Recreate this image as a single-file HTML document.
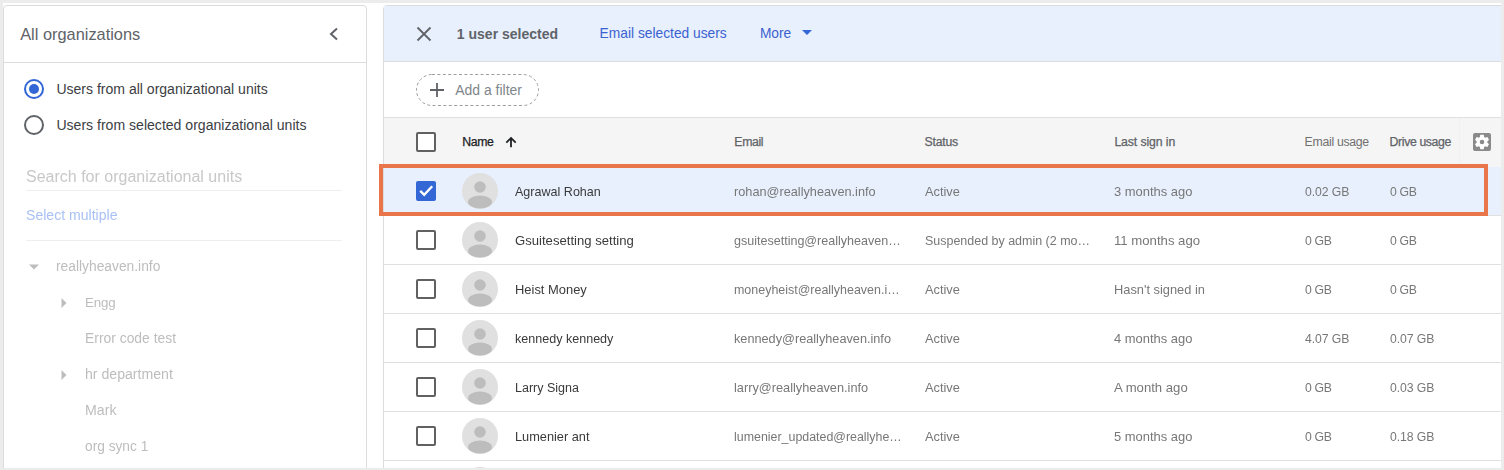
<!DOCTYPE html>
<html><head><meta charset="utf-8">
<style>
*{box-sizing:border-box;margin:0;padding:0}
html,body{width:1504px;height:470px;overflow:hidden;background:#fff;font-family:"Liberation Sans",sans-serif;position:relative}
.a{position:absolute;white-space:nowrap}
.r{position:absolute}
</style></head><body>
<div class="r" style="left:3px;top:5px;width:364px;height:520px;border:1px solid #dcdcdc;border-radius:4px;background:#fff"></div>
<div class="r" style="left:383px;top:5px;width:1200px;height:520px;border:1px solid #dcdcdc;border-radius:4px;background:#fff;overflow:hidden"></div>
<div class="a" style="left:20.20px;top:26px;font-size:16.36px;line-height:16px;color:#5f6368;font-weight:400;">All organizations</div>
<svg class="r" style="left:326px;top:26px" width="16" height="16" viewBox="0 0 16 16"><path d="M11 2.5 L5 8 L11 13.5" fill="none" stroke="#5f6368" stroke-width="2"/></svg>
<div class="r" style="left:4px;top:62px;width:362px;height:1px;background:#dcdcdc"></div>
<div class="r" style="left:24px;top:79px;width:20px;height:20px;border:2px solid #3367d6;border-radius:50%"></div>
<div class="r" style="left:29px;top:84px;width:10px;height:10px;background:#3367d6;border-radius:50%"></div>
<div class="a" style="left:56.40px;top:82px;font-size:14.04px;line-height:14px;color:#3c4043;font-weight:400;">Users from all organizational units</div>
<div class="r" style="left:24px;top:115px;width:20px;height:20px;border:2px solid #5f6368;border-radius:50%"></div>
<div class="a" style="left:56.40px;top:118px;font-size:14.07px;line-height:14px;color:#3c4043;font-weight:400;">Users from selected organizational units</div>
<div class="a" style="left:26.30px;top:169px;font-size:16.0px;line-height:16px;color:#c8c8c8;font-weight:400;will-change:transform;">Search for organizational units</div>
<div class="r" style="left:26px;top:190px;width:316px;height:1px;background:#eeeeee"></div>
<div class="a" style="left:26.00px;top:208px;font-size:14.07px;line-height:14px;color:#a8c1f4;font-weight:400;will-change:transform;">Select multiple</div>
<div class="r" style="left:26px;top:240px;width:316px;height:1px;background:#eeeeee"></div>
<svg class="r" style="left:29px;top:264px" width="10" height="6" viewBox="0 0 10 6"><path d="M0 0.5 L10 0.5 L5 5.5 Z" fill="#bdbdbd"/></svg>
<div class="a" style="left:56.20px;top:259px;font-size:13.81px;line-height:14px;color:#bdbdbd;font-weight:400;will-change:transform;">reallyheaven.info</div>
<svg class="r" style="left:61px;top:298px" width="6" height="10" viewBox="0 0 6 10"><path d="M0.5 0 L5.5 5 L0.5 10 Z" fill="#bdbdbd"/></svg>
<div class="a" style="left:85.10px;top:296px;font-size:13.3px;line-height:13px;color:#bdbdbd;font-weight:400;will-change:transform;letter-spacing:-0.118px;">Engg</div>
<div class="a" style="left:85.10px;top:331px;font-size:13.89px;line-height:14px;color:#bdbdbd;font-weight:400;will-change:transform;">Error code test</div>
<svg class="r" style="left:61px;top:370px" width="6" height="10" viewBox="0 0 6 10"><path d="M0.5 0 L5.5 5 L0.5 10 Z" fill="#bdbdbd"/></svg>
<div class="a" style="left:85.10px;top:367px;font-size:14.12px;line-height:14px;color:#bdbdbd;font-weight:400;will-change:transform;">hr department</div>
<div class="a" style="left:85.10px;top:403px;font-size:14.16px;line-height:14px;color:#bdbdbd;font-weight:400;will-change:transform;">Mark</div>
<div class="a" style="left:85.10px;top:440px;font-size:13.72px;line-height:14px;color:#bdbdbd;font-weight:400;will-change:transform;">org sync 1</div>
<div class="r" style="left:384px;top:6px;width:1117px;height:56px;background:#e8f0fe;border-bottom:1px solid #dcdcdc"></div>
<svg class="r" style="left:416px;top:26px" width="16" height="16" viewBox="0 0 16 16"><path d="M1.5 1.5 L14.5 14.5 M14.5 1.5 L1.5 14.5" fill="none" stroke="#5f6368" stroke-width="1.8"/></svg>
<div class="a" style="left:456.80px;top:27px;font-size:14.02px;line-height:14px;color:#5f6368;font-weight:700;">1 user selected</div>
<div class="a" style="left:599.60px;top:27px;font-size:13.79px;line-height:14px;color:#3b62d0;font-weight:400;">Email selected users</div>
<div class="a" style="left:759.90px;top:27px;font-size:13.77px;line-height:14px;color:#3b62d0;font-weight:400;">More</div>
<svg class="r" style="left:802px;top:30px" width="10" height="5" viewBox="0 0 10 5"><path d="M0 0 L10 0 L5 5 Z" fill="#3367d6"/></svg>
<svg class="r" style="left:416px;top:74px" width="123" height="32" viewBox="0 0 123 32"><rect x="0.5" y="0.5" width="122" height="31" rx="15.5" fill="none" stroke="#9e9e9e" stroke-width="1" stroke-dasharray="3 2.4"/></svg>
<svg class="r" style="left:429px;top:82px" width="16" height="16" viewBox="0 0 16 16"><path d="M8 1 V15 M1 8 H15" fill="none" stroke="#5f6368" stroke-width="1.8"/></svg>
<div class="a" style="left:455.30px;top:83px;font-size:13.95px;line-height:14px;color:#80868b;font-weight:400;">Add a filter</div>
<div class="r" style="left:384px;top:117px;width:1117px;height:50px;background:#f5f5f5;border-top:1px solid #e0e0e0"></div>
<div class="r" style="left:416px;top:132px;width:20px;height:20px;border:2px solid #616161;border-radius:2px;background:#fff"></div>
<div class="a" style="left:462.30px;top:136px;font-size:12.28px;line-height:12px;color:#202124;font-weight:400;-webkit-text-stroke:0.25px #202124;letter-spacing:-0.363px;">Name</div>
<svg class="r" style="left:505px;top:136px" width="12" height="12" viewBox="0 0 12 12"><path d="M6 11.2 V2 M1.3 6.6 L6 1.9 L10.7 6.6" fill="none" stroke="#202124" stroke-width="1.8"/></svg>
<div class="a" style="left:734.30px;top:136px;font-size:12.28px;line-height:12px;color:#5f6368;font-weight:400;-webkit-text-stroke:0.25px #5f6368;letter-spacing:-0.350px;">Email</div>
<div class="a" style="left:924.50px;top:136px;font-size:12.28px;line-height:12px;color:#5f6368;font-weight:400;-webkit-text-stroke:0.25px #5f6368;letter-spacing:-0.223px;">Status</div>
<div class="a" style="left:1114.40px;top:136px;font-size:12.28px;line-height:12px;color:#5f6368;font-weight:400;-webkit-text-stroke:0.25px #5f6368;letter-spacing:-0.103px;">Last sign in</div>
<div class="a" style="left:1304.60px;top:136px;font-size:12.28px;line-height:12px;color:#707070;font-weight:400;letter-spacing:-0.290px;">Email usage</div>
<div class="a" style="left:1389.60px;top:136px;font-size:12.28px;line-height:12px;color:#5f6368;font-weight:400;-webkit-text-stroke:0.25px #5f6368;letter-spacing:-0.371px;">Drive usage</div>
<div class="r" style="left:1459px;top:118px;width:1px;height:48px;background:#f0f0f0"></div>
<div class="r" style="left:1473px;top:133px;width:18px;height:18px;background:#8a8a8a;border-radius:2px"></div>
<svg class="r" style="left:1473px;top:133px" width="18" height="18" viewBox="0 0 24 24"><path fill="#fff" d="M19.14 12.94c.04-.3.06-.61.06-.94 0-.32-.02-.64-.07-.94l2.03-1.58c.18-.14.23-.41.12-.61l-1.92-3.32c-.12-.22-.37-.29-.59-.22l-2.39.96c-.5-.38-1.030-.7-1.62-.94l-.36-2.54c-.04-.24-.24-.41-.48-.41h-3.84c-.24 0-.43.17-.47.41l-.36 2.54c-.59.24-1.13.57-1.62.94l-2.39-.96c-.22-.08-.47 0-.59.22L2.74 8.870c-.12.21-.08.47.12.61l2.03 1.58c-.05.3-.09.63-.09.94s.02.64.07.94l-2.03 1.58c-.18.14-.23.41-.12.61l1.920 3.32c.12.22.37.29.59.22l2.39-.96c.5.38 1.03.7 1.62.94l.36 2.54c.05.24.24.41.48.41h3.84c.24 0 .44-.17.47-.41l.36-2.54c.59-.24 1.13-.56 1.62-.94l2.39.96c.22.08.47 0 .59-.22l1.92-3.32c.12-.22.07-.47-.12-.61l-2.01-1.58z"/><circle cx="12" cy="12" r="3" fill="#8a8a8a"/></svg>
<div class="r" style="left:384px;top:167px;width:1117px;height:49px;background:#e8f0fe;border-bottom:1px solid #e0e0e0"></div>
<div class="r" style="left:416px;top:181px;width:20px;height:20px;background:#3367d6;border-radius:2px"></div>
<svg class="r" style="left:416px;top:181px" width="20" height="20" viewBox="0 0 20 20"><path d="M4.2 9.8 L8.2 13.8 L16.2 5.2" fill="none" stroke="#fff" stroke-width="2.4"/></svg>
<svg class="r" style="left:462px;top:173px" width="36" height="36" viewBox="0 0 36 36"><defs><clipPath id="cp0"><circle cx="18" cy="18" r="18"/></clipPath></defs><circle cx="18" cy="18" r="18" fill="#e0e0e0"/><g clip-path="url(#cp0)"><circle cx="18" cy="14" r="5.8" fill="#bdbdbd"/><ellipse cx="18" cy="29" rx="12" ry="6.5" fill="#bdbdbd"/></g></svg>
<div class="a" style="left:514.50px;top:186px;font-size:12.56px;line-height:13px;color:#3a3a3a;font-weight:400;will-change:transform;">Agrawal Rohan</div>
<div class="a" style="left:734.30px;top:185px;font-size:12.73px;line-height:13px;color:#777777;font-weight:400;will-change:transform;">rohan@reallyheaven.info</div>
<div class="a" style="left:924.50px;top:185px;font-size:12.81px;line-height:13px;color:#777777;font-weight:400;will-change:transform;">Active</div>
<div class="a" style="left:1114.40px;top:185px;font-size:12.95px;line-height:13px;color:#777777;font-weight:400;will-change:transform;">3 months ago</div>
<div class="a" style="left:1304.60px;top:186px;font-size:12.22px;line-height:12px;color:#777777;font-weight:400;will-change:transform;letter-spacing:-0.091px;">0.02 GB</div>
<div class="a" style="left:1389.60px;top:186px;font-size:12.22px;line-height:12px;color:#777777;font-weight:400;will-change:transform;letter-spacing:-0.300px;">0 GB</div>
<div class="r" style="left:384px;top:216px;width:1117px;height:49px;background:#fff;border-bottom:1px solid #e0e0e0"></div>
<div class="r" style="left:416px;top:230px;width:20px;height:20px;border:2px solid #616161;border-radius:2px"></div>
<svg class="r" style="left:462px;top:222px" width="36" height="36" viewBox="0 0 36 36"><defs><clipPath id="cp1"><circle cx="18" cy="18" r="18"/></clipPath></defs><circle cx="18" cy="18" r="18" fill="#e0e0e0"/><g clip-path="url(#cp1)"><circle cx="18" cy="14" r="5.8" fill="#bdbdbd"/><ellipse cx="18" cy="29" rx="12" ry="6.5" fill="#bdbdbd"/></g></svg>
<div class="a" style="left:514.50px;top:234px;font-size:13.11px;line-height:13px;color:#3a3a3a;font-weight:400;will-change:transform;">Gsuitesetting setting</div>
<div class="a" style="left:734.30px;top:235px;font-size:12.54px;line-height:13px;color:#777777;font-weight:400;will-change:transform;">gsuitesetting@reallyheaven…</div>
<div class="a" style="left:924.50px;top:235px;font-size:12.48px;line-height:12px;color:#777777;font-weight:400;will-change:transform;">Suspended by admin (2 mo…</div>
<div class="a" style="left:1114.40px;top:234px;font-size:13.17px;line-height:13px;color:#777777;font-weight:400;will-change:transform;">11 months ago</div>
<div class="a" style="left:1304.60px;top:235px;font-size:12.22px;line-height:12px;color:#777777;font-weight:400;will-change:transform;letter-spacing:-0.300px;">0 GB</div>
<div class="a" style="left:1389.60px;top:235px;font-size:12.22px;line-height:12px;color:#777777;font-weight:400;will-change:transform;letter-spacing:-0.300px;">0 GB</div>
<div class="r" style="left:384px;top:265px;width:1117px;height:49px;background:#fff;border-bottom:1px solid #e0e0e0"></div>
<div class="r" style="left:416px;top:279px;width:20px;height:20px;border:2px solid #616161;border-radius:2px"></div>
<svg class="r" style="left:462px;top:271px" width="36" height="36" viewBox="0 0 36 36"><defs><clipPath id="cp2"><circle cx="18" cy="18" r="18"/></clipPath></defs><circle cx="18" cy="18" r="18" fill="#e0e0e0"/><g clip-path="url(#cp2)"><circle cx="18" cy="14" r="5.8" fill="#bdbdbd"/><ellipse cx="18" cy="29" rx="12" ry="6.5" fill="#bdbdbd"/></g></svg>
<div class="a" style="left:514.50px;top:283px;font-size:12.93px;line-height:13px;color:#3a3a3a;font-weight:400;will-change:transform;">Heist Money</div>
<div class="a" style="left:734.30px;top:284px;font-size:12.46px;line-height:12px;color:#777777;font-weight:400;will-change:transform;">moneyheist@reallyheaven.i…</div>
<div class="a" style="left:924.50px;top:283px;font-size:12.81px;line-height:13px;color:#777777;font-weight:400;will-change:transform;">Active</div>
<div class="a" style="left:1114.40px;top:283px;font-size:12.83px;line-height:13px;color:#777777;font-weight:400;will-change:transform;">Hasn't signed in</div>
<div class="a" style="left:1304.60px;top:284px;font-size:12.22px;line-height:12px;color:#777777;font-weight:400;will-change:transform;letter-spacing:-0.300px;">0 GB</div>
<div class="a" style="left:1389.60px;top:284px;font-size:12.22px;line-height:12px;color:#777777;font-weight:400;will-change:transform;letter-spacing:-0.300px;">0 GB</div>
<div class="r" style="left:384px;top:314px;width:1117px;height:49px;background:#fff;border-bottom:1px solid #e0e0e0"></div>
<div class="r" style="left:416px;top:328px;width:20px;height:20px;border:2px solid #616161;border-radius:2px"></div>
<svg class="r" style="left:462px;top:320px" width="36" height="36" viewBox="0 0 36 36"><defs><clipPath id="cp3"><circle cx="18" cy="18" r="18"/></clipPath></defs><circle cx="18" cy="18" r="18" fill="#e0e0e0"/><g clip-path="url(#cp3)"><circle cx="18" cy="14" r="5.8" fill="#bdbdbd"/><ellipse cx="18" cy="29" rx="12" ry="6.5" fill="#bdbdbd"/></g></svg>
<div class="a" style="left:514.50px;top:333px;font-size:12.56px;line-height:13px;color:#3a3a3a;font-weight:400;will-change:transform;">kennedy kennedy</div>
<div class="a" style="left:734.30px;top:332px;font-size:12.71px;line-height:13px;color:#777777;font-weight:400;will-change:transform;">kennedy@reallyheaven.info</div>
<div class="a" style="left:924.50px;top:332px;font-size:12.81px;line-height:13px;color:#777777;font-weight:400;will-change:transform;">Active</div>
<div class="a" style="left:1114.40px;top:332px;font-size:12.95px;line-height:13px;color:#777777;font-weight:400;will-change:transform;">4 months ago</div>
<div class="a" style="left:1304.60px;top:333px;font-size:12.22px;line-height:12px;color:#777777;font-weight:400;will-change:transform;letter-spacing:-0.091px;">4.07 GB</div>
<div class="a" style="left:1389.60px;top:333px;font-size:12.22px;line-height:12px;color:#777777;font-weight:400;will-change:transform;letter-spacing:-0.091px;">0.07 GB</div>
<div class="r" style="left:384px;top:363px;width:1117px;height:49px;background:#fff;border-bottom:1px solid #e0e0e0"></div>
<div class="r" style="left:416px;top:377px;width:20px;height:20px;border:2px solid #616161;border-radius:2px"></div>
<svg class="r" style="left:462px;top:369px" width="36" height="36" viewBox="0 0 36 36"><defs><clipPath id="cp4"><circle cx="18" cy="18" r="18"/></clipPath></defs><circle cx="18" cy="18" r="18" fill="#e0e0e0"/><g clip-path="url(#cp4)"><circle cx="18" cy="14" r="5.8" fill="#bdbdbd"/><ellipse cx="18" cy="29" rx="12" ry="6.5" fill="#bdbdbd"/></g></svg>
<div class="a" style="left:514.50px;top:382px;font-size:12.5px;line-height:12px;color:#3a3a3a;font-weight:400;will-change:transform;">Larry Signa</div>
<div class="a" style="left:734.30px;top:381px;font-size:12.75px;line-height:13px;color:#777777;font-weight:400;will-change:transform;">larry@reallyheaven.info</div>
<div class="a" style="left:924.50px;top:381px;font-size:12.81px;line-height:13px;color:#777777;font-weight:400;will-change:transform;">Active</div>
<div class="a" style="left:1114.40px;top:381px;font-size:13.13px;line-height:13px;color:#777777;font-weight:400;will-change:transform;">A month ago</div>
<div class="a" style="left:1304.60px;top:382px;font-size:12.22px;line-height:12px;color:#777777;font-weight:400;will-change:transform;letter-spacing:-0.300px;">0 GB</div>
<div class="a" style="left:1389.60px;top:382px;font-size:12.22px;line-height:12px;color:#777777;font-weight:400;will-change:transform;letter-spacing:-0.091px;">0.03 GB</div>
<div class="r" style="left:384px;top:412px;width:1117px;height:49px;background:#fff;border-bottom:1px solid #e0e0e0"></div>
<div class="r" style="left:416px;top:426px;width:20px;height:20px;border:2px solid #616161;border-radius:2px"></div>
<svg class="r" style="left:462px;top:418px" width="36" height="36" viewBox="0 0 36 36"><defs><clipPath id="cp5"><circle cx="18" cy="18" r="18"/></clipPath></defs><circle cx="18" cy="18" r="18" fill="#e0e0e0"/><g clip-path="url(#cp5)"><circle cx="18" cy="14" r="5.8" fill="#bdbdbd"/><ellipse cx="18" cy="29" rx="12" ry="6.5" fill="#bdbdbd"/></g></svg>
<div class="a" style="left:514.50px;top:430px;font-size:12.78px;line-height:13px;color:#3a3a3a;font-weight:400;will-change:transform;">Lumenier ant</div>
<div class="a" style="left:734.30px;top:431px;font-size:12.42px;line-height:12px;color:#777777;font-weight:400;will-change:transform;">lumenier_updated@reallyhe…</div>
<div class="a" style="left:924.50px;top:430px;font-size:12.81px;line-height:13px;color:#777777;font-weight:400;will-change:transform;">Active</div>
<div class="a" style="left:1114.40px;top:430px;font-size:12.95px;line-height:13px;color:#777777;font-weight:400;will-change:transform;">5 months ago</div>
<div class="a" style="left:1304.60px;top:431px;font-size:12.22px;line-height:12px;color:#777777;font-weight:400;will-change:transform;letter-spacing:-0.300px;">0 GB</div>
<div class="a" style="left:1389.60px;top:431px;font-size:12.22px;line-height:12px;color:#777777;font-weight:400;will-change:transform;letter-spacing:-0.091px;">0.18 GB</div>
<div class="r" style="left:384px;top:461px;width:1117px;height:49px;background:#fff;border-bottom:1px solid #e0e0e0"></div>
<div class="r" style="left:416px;top:475px;width:20px;height:20px;border:2px solid #616161;border-radius:2px"></div>
<svg class="r" style="left:462px;top:467px" width="36" height="36" viewBox="0 0 36 36"><defs><clipPath id="cp6"><circle cx="18" cy="18" r="18"/></clipPath></defs><circle cx="18" cy="18" r="18" fill="#e0e0e0"/><g clip-path="url(#cp6)"><circle cx="18" cy="14" r="5.8" fill="#bdbdbd"/><ellipse cx="18" cy="29" rx="12" ry="6.5" fill="#bdbdbd"/></g></svg>
<div class="r" style="left:379px;top:164px;width:1109px;height:52px;border:4px solid #e8764a"></div>
<div class="r" style="left:0;top:0;width:1504px;height:3px;background:#ececec"></div>
<div class="r" style="left:0;top:0;width:3px;height:470px;background:#ececec"></div>
<div class="r" style="left:1501px;top:0;width:3px;height:470px;background:#ececec"></div>
<div class="r" style="left:0;top:468px;width:1504px;height:2px;background:#ececec"></div>
</body></html>
